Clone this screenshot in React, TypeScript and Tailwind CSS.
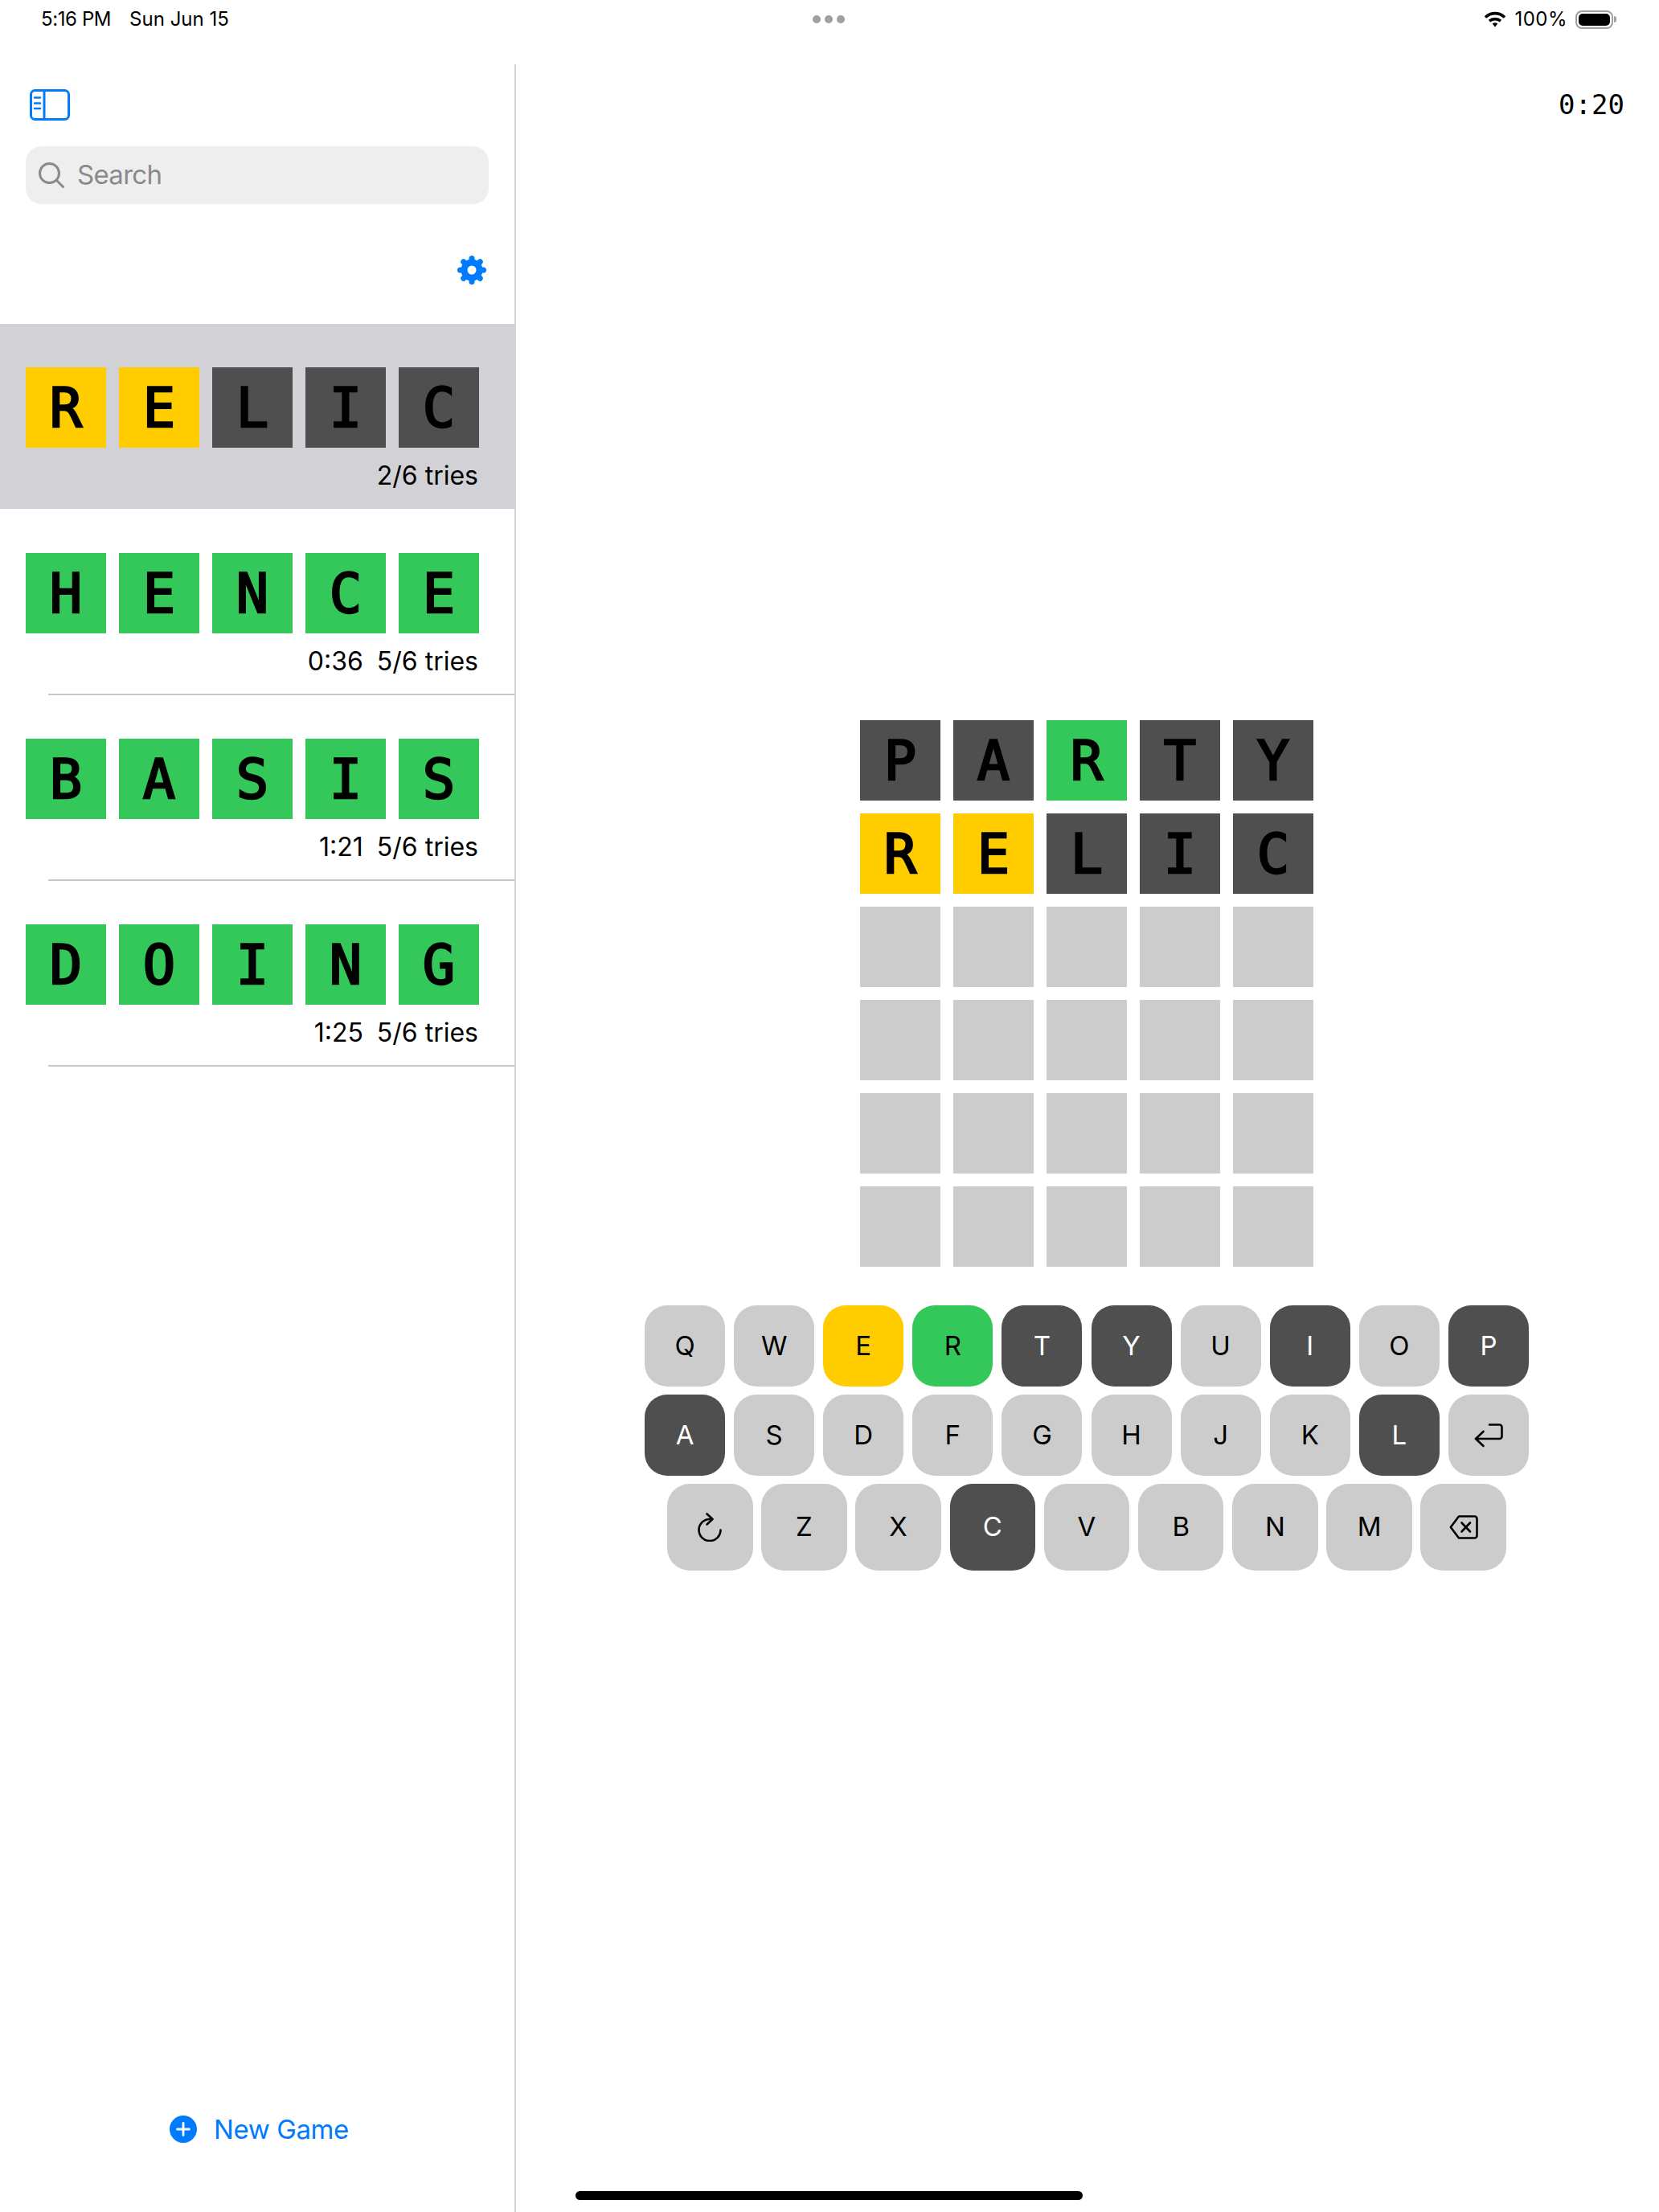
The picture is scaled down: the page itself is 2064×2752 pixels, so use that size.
const TILE: Record<string, string> = {
  y: "bg-[#ffcc00]",
  g: "bg-[#34c759]",
  d: "bg-[#4f4f4f]",
  e: "bg-[#cccccc]",
};

const GAMES = [
  { word: "HENCE", time: "0:36", tries: "5/6 tries" },
  { word: "BASIS", time: "1:21", tries: "5/6 tries" },
  { word: "DOING", time: "1:25", tries: "5/6 tries" },
];

const BOARD = [
  ["PARTY", "ddgdd"],
  ["RELIC", "yyddd"],
  ["     ", "eeeee"],
  ["     ", "eeeee"],
  ["     ", "eeeee"],
  ["     ", "eeeee"],
];

const KEY_COLORS: Record<string, string> = {
  E: "y",
  R: "g",
  T: "d",
  Y: "d",
  I: "d",
  P: "d",
  A: "d",
  L: "d",
  C: "d",
};

function Tile({ letter, state }: { letter: string; state: string }) {
  return (
    <div
      className={`flex h-[100px] w-[100px] items-center justify-center pt-[2px] font-['DejaVu_Sans_Mono'] text-[67px] leading-none text-black [-webkit-text-stroke:2.5px_#000] ${TILE[state]}`}
    >
      {letter.trim()}
    </div>
  );
}

function Word({ word, states }: { word: string; states: string }) {
  return (
    <div className="flex gap-4">
      {word.split("").map((letter, i) => (
        <Tile key={i} letter={letter} state={states[i]} />
      ))}
    </div>
  );
}

function Key({ label, wide, children }: { label?: string; wide?: boolean; children?: React.ReactNode }) {
  const state = label ? KEY_COLORS[label] : undefined;
  const color = state ? TILE[state] : "bg-[#cccccc]";
  const text = state === "d" ? "text-white" : "text-black";
  const size = wide ? "h-[108px] w-[106.6px]" : "h-[101px] w-[100px]";
  return (
    <div className={`flex items-center justify-center rounded-[28px] text-[33px] ${size} ${color} ${text}`}>
      {label}
      {children}
    </div>
  );
}

function KeyRow({ keys }: { keys: string }) {
  return (
    <div className="flex justify-center gap-[11.1px]">
      {keys.split("").map((k) => (
        <Key key={k} label={k} />
      ))}
    </div>
  );
}

function SidebarIcon() {
  return (
    <svg width="50" height="39" viewBox="0 0 50 39" fill="none" stroke="#007aff">
      <rect x="1.5" y="1.5" width="47" height="36" rx="5" strokeWidth="3" />
      <path d="M18 2V37" strokeWidth="3" />
      <path d="M6 10.5H13M6 17.5H13M6 24H13" strokeWidth="2.5" strokeLinecap="round" />
    </svg>
  );
}

function Gear() {
  return (
    <svg width="36" height="36" viewBox="0 0 36 36" fill="none" stroke="#007aff">
      <circle cx="18" cy="18" r="9.5" strokeWidth="8" />
      {[0, 45, 90, 135, 180, 225, 270, 315].map((deg) => (
        <path key={deg} d="M18 8V3.5" strokeWidth="7" strokeLinecap="round" transform={`rotate(${deg} 18 18)`} />
      ))}
    </svg>
  );
}

function SearchIcon() {
  return (
    <svg width="32" height="32" viewBox="0 0 32 32" fill="none" stroke="#8a8a8e" strokeWidth="3" strokeLinecap="round">
      <circle cx="13.5" cy="13.5" r="12" />
      <path d="M22.5 22.5L30.5 30.5" />
    </svg>
  );
}

function Wifi() {
  return (
    <svg width="28" height="20" viewBox="0 0 28 20" fill="none" stroke="#000">
      <path d="M2 7.5C9 1 19 1 26 7.5" strokeWidth="3.6" />
      <path d="M7 12.2C11 8.8 17 8.8 21 12.2" strokeWidth="3.6" />
      <path d="M10.7 15.4L14 19.5L17.3 15.4C15.3 13.8 12.7 13.8 10.7 15.4Z" fill="#000" stroke="none" />
    </svg>
  );
}

function Battery() {
  return (
    <div className="flex items-center gap-[1px]">
      <div className="flex h-[23px] w-[47px] rounded-[8px] border-2 border-[#a0a0a0] p-[2px]">
        <div className="flex-1 rounded-[5px] bg-black" />
      </div>
      <div className="h-[8px] w-[3px] rounded-r-full bg-[#a0a0a0]" />
    </div>
  );
}

function RestartIcon() {
  return (
    <svg width="32" height="36" viewBox="0 0 32 36" fill="none" stroke="#000" strokeWidth="2.6" strokeLinecap="round" strokeLinejoin="round">
      <path d="M16 8A13.5 13.5 0 1 0 29.5 21.5" />
      <path d="M12.5 1.5L19.5 8L12.5 14.5" />
    </svg>
  );
}

function ReturnIcon() {
  return (
    <svg width="36" height="30" viewBox="0 0 36 30" fill="none" stroke="#000" strokeWidth="2.6" strokeLinecap="round" strokeLinejoin="round">
      <path d="M19 1.5H31.5A3 3 0 0 1 34.5 4.5V16A3 3 0 0 1 31.5 19H2" />
      <path d="M11.5 10L2 19L11.5 28" />
    </svg>
  );
}

function DeleteIcon() {
  return (
    <svg width="36" height="30" viewBox="0 0 36 30" fill="none" stroke="#000" strokeWidth="2.6" strokeLinecap="round" strokeLinejoin="round">
      <path d="M12 1.5H31.5A3 3 0 0 1 34.5 4.5V25.5A3 3 0 0 1 31.5 28.5H12L1.8 15Z" />
      <path d="M15.5 9.5L26 20.5M26 9.5L15.5 20.5" />
    </svg>
  );
}

export default function App() {
  return (
    <div className="relative flex h-[2752px] w-[2064px] flex-col overflow-hidden bg-white font-['Inter'] text-black">
      {/* status bar */}
      <div className="h-[80px]">
        <div className="grid h-[48px] grid-cols-3 items-center pr-[53px] pl-[51px] text-[24px]">
          <div className="flex gap-[23px]">
            <span className="tracking-[-0.4px]">5:16 PM</span>
            <span>Sun Jun 15</span>
          </div>
          <div className="flex justify-center gap-[5px]">
            <div className="h-[10px] w-[10px] rounded-full bg-[#a0a0a0]" />
            <div className="h-[10px] w-[10px] rounded-full bg-[#a0a0a0]" />
            <div className="h-[10px] w-[10px] rounded-full bg-[#a0a0a0]" />
          </div>
          <div className="flex items-center justify-end gap-[10px]">
            <Wifi />
            <span className="tracking-[0.5px]">100%</span>
            <Battery />
          </div>
        </div>
      </div>

      <div className="flex flex-1">
        {/* sidebar */}
        <aside className="flex w-[642px] flex-col border-r-2 border-[#d4d4d6]">
          <div className="pt-[31px] pl-[37px]">
            <SidebarIcon />
          </div>
          <div className="mt-[32px] ml-[32px] flex h-[72px] w-[576px] items-center gap-[16px] rounded-[20px] bg-[#eeeeef] pl-[16px] text-[33px] tracking-[-0.7px] text-[#8a8a8e]">
            <SearchIcon />
            <span>Search</span>
          </div>
          <div className="mt-[64px] flex justify-end pr-[35px]">
            <Gear />
          </div>

          <div className="mt-[49px] h-[230px] bg-[#d1d1d6] pt-[54px]">
            <div className="pl-[32px]">
              <Word word="RELIC" states="yyddd" />
            </div>
            <div className="mt-[15px] pr-[45px] text-right text-[32px] leading-[40px]">2/6 tries</div>
          </div>

          {GAMES.map((game) => (
            <div key={game.word} className="flex h-[231px] flex-col pt-[55px]">
              <div className="pl-[32px]">
                <Word word={game.word} states="ggggg" />
              </div>
              <div className="mt-[15px] flex justify-end gap-[17px] pr-[45px] text-[32px] leading-[40px]">
                <span>{game.time}</span>
                <span>{game.tries}</span>
              </div>
              <div className="mt-auto -mb-[1px] ml-[60px] h-[2px] bg-[#c8c8ca]" />
            </div>
          ))}

          <div className="mt-auto flex items-center justify-center gap-[21px] pb-[78px] pl-[5px] text-[33px] tracking-[-0.4px] text-[#007aff]">
            <svg width="34" height="34" viewBox="0 0 34 34">
              <circle cx="17" cy="17" r="17" fill="#007aff" />
              <path d="M17 9.5V24.5M9.5 17H24.5" stroke="#fff" strokeWidth="2.8" strokeLinecap="round" />
            </svg>
            <span>New Game</span>
          </div>
        </aside>

        {/* game */}
        <main className="flex flex-1 flex-col pr-[2px]">
          <div className="pt-[30px] pr-[41px] text-right font-['DejaVu_Sans_Mono'] text-[34px] leading-[40px]">0:20</div>

          <div className="mt-[746px] flex flex-col items-center gap-4">
            {BOARD.map(([word, states], i) => (
              <Word key={i} word={word} states={states} />
            ))}
          </div>

          <div className="mt-[48px] flex flex-col gap-[10px]">
            <KeyRow keys="QWERTYUIOP" />
            <div className="flex justify-center gap-[11.1px]">
              {"ASDFGHJKL".split("").map((k) => (
                <Key key={k} label={k} />
              ))}
              <Key>
                <ReturnIcon />
              </Key>
            </div>
            <div className="flex justify-center gap-[10.6px]">
              <Key wide>
                <RestartIcon />
              </Key>
              {"ZXCVBNM".split("").map((k) => (
                <Key key={k} label={k} wide />
              ))}
              <Key wide>
                <DeleteIcon />
              </Key>
            </div>
          </div>
        </main>
      </div>

      {/* home indicator */}
      <div className="absolute top-[2726px] left-[716px] h-[11px] w-[631px] rounded-full bg-black" />
    </div>
  );
}
